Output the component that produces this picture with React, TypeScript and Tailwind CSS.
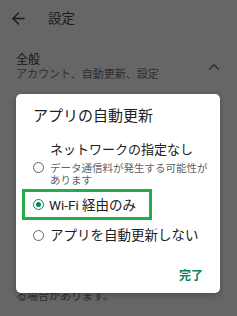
import { ArrowLeft, ChevronUp } from 'lucide-react';

const font = { fontFamily: 'Roboto, "Noto Sans CJK JP", sans-serif' };

function Radio({ checked }: { checked?: boolean }) {
  if (checked) {
    return (
      <span className="flex h-[11px] w-[11px] shrink-0 items-center justify-center rounded-full border-[1.5px] border-[#01875f]">
        <span className="block h-[5px] w-[5px] rounded-full bg-[#01875f]" />
      </span>
    );
  }
  return <span className="block h-[11px] w-[11px] shrink-0 rounded-full border-[1.5px] border-[#5f6368]" />;
}

export default function App() {
  return (
    <div className="relative h-[316px] w-[237px] overflow-hidden bg-[#666666]" style={font}>
      {/* page behind the scrim */}
      <div className="flex h-[36px] items-center pl-[9px] text-[#1c1c1c]">
        <ArrowLeft size={19} strokeWidth={1.8} />
        <span className="ml-[20px] text-[13.5px] leading-[18px]">設定</span>
      </div>

      <div className="flex items-center justify-between pt-[16px] pl-[16px] pr-[14px]">
        <div>
          <div className="text-[12px] leading-[16px] text-[#161616]">全般</div>
          <div className="text-[11px] leading-[14px] text-[#2e2e2e]">アカウント、自動更新、設定</div>
        </div>
        <ChevronUp size={18} strokeWidth={1.6} className="text-[#2a2a2a]" />
      </div>

      <div className="mt-[208px] pl-[16px] text-[11px] leading-[14px] text-[#2e2e2e]">
        る場合があります。
      </div>

      {/* dialog */}
      <div className="absolute left-[16px] top-[94px] flex h-[199px] w-[204px] flex-col rounded-[5px] bg-white pt-[12px] shadow-[0_2px_6px_rgba(0,0,0,0.25)]">
        <div className="pl-[17px] text-[15px] leading-[20px] text-[#202124]">アプリの自動更新</div>

        <div className="mt-[15px] flex items-start pl-[17px]">
          <div className="mt-[21px] shrink-0">
            <Radio />
          </div>
          <div className="ml-[6px]">
            <div className="text-[13px] leading-[18px] text-[#202124]">ネットワークの指定なし</div>
            <div className="mt-[4px] text-[10.5px] leading-[12px] text-[#5f6368]">
              データ通信料が発生する可能性が
              <br />
              あります
            </div>
          </div>
        </div>

        <div className="ml-[6px] mt-[2px] flex h-[31px] w-[130px] items-center border-[3px] border-[#22ac4c] pl-[8px]">
          <Radio checked />
          <span className="ml-[5px] text-[13.5px] leading-[18px] text-[#202124]">Wi-Fi 経由のみ</span>
        </div>

        <div className="mt-[6px] flex items-center pl-[17px]">
          <Radio />
          <span className="ml-[6px] text-[13.5px] leading-[18px] text-[#202124]">アプリを自動更新しない</span>
        </div>

        <div className="mt-[24px] flex justify-end pr-[17px]">
          <span className="text-[12px] font-bold leading-[16px] text-[#01875f]">完了</span>
        </div>
      </div>
    </div>
  );
}
